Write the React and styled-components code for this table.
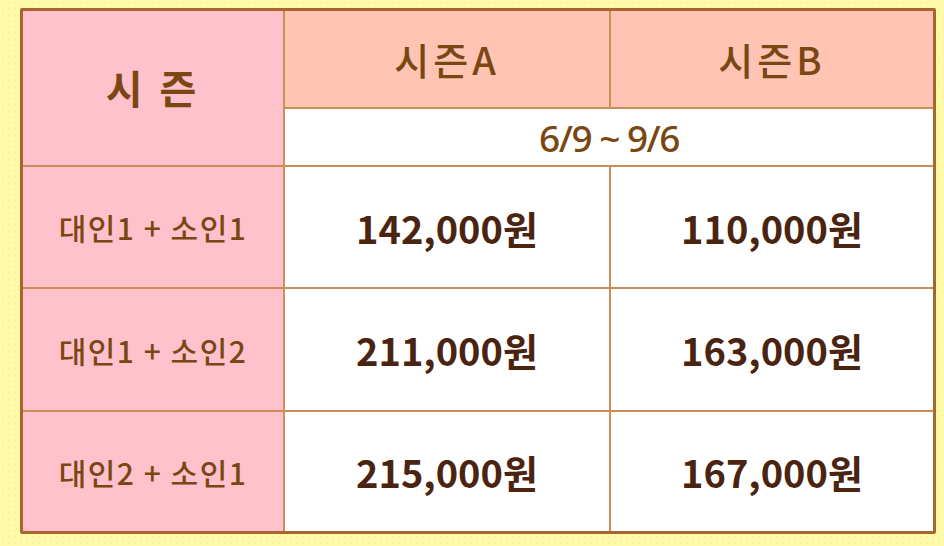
import React from 'react';
import styled, { createGlobalStyle } from 'styled-components';

const COLORS = {
    yellow: '#fffaa8',
    pink: '#ffc1cc',
    salmon: '#ffc4b3',
    white: '#ffffff',
    line: '#cc8d58',
    outline: '#a7662d',
    label: '#7a4712',
    price: '#4a2410',
};

const GlobalStyle = createGlobalStyle`
    html, body {
        margin: 0;
        padding: 0;
        background: ${COLORS.yellow};
    }
    body {
        font-family: "Noto Sans CJK KR", "Noto Sans", sans-serif;
    }
`;

const Page = styled.div`
    width: 944px;
    height: 546px;
    box-sizing: border-box;
    padding: 8px 8px 12px 20px;
    background-color: ${COLORS.yellow};
    background-image: radial-gradient(rgba(220, 200, 120, 0.35) 0.6px, transparent 0.8px);
    background-size: 6px 6px;
`;

const Table = styled.div`
    display: grid;
    grid-template-columns: 260px 324px 1fr;
    grid-template-rows: 96px 56px 120px 121px 1fr;
    gap: 2px;
    width: 916px;
    height: 526px;
    box-sizing: border-box;
    border: 3px solid ${COLORS.outline};
    border-radius: 2px;
    background: ${COLORS.line};
`;

const Cell = styled.div`
    display: flex;
    align-items: center;
    justify-content: center;
    background: ${({ $bg }) => $bg || COLORS.white};
    grid-row: ${({ $row }) => $row || 'auto'};
    grid-column: ${({ $col }) => $col || 'auto'};
    white-space: pre;
`;

const SeasonTitle = styled.span`
    font-size: 40px;
    font-weight: 700;
    color: ${COLORS.label};
    letter-spacing: 4px;
    margin-bottom: 2px;
`;

const SeasonHead = styled.span`
    font-size: 38px;
    font-weight: 500;
    color: ${COLORS.label};
    letter-spacing: 4px;
    margin-bottom: 2px;
`;

const DateText = styled.span`
    font-family: "Noto Sans", sans-serif;
    font-size: 37px;
    font-weight: 500;
    color: ${COLORS.label};
    letter-spacing: -1.5px;
`;

const RowLabel = styled.span`
    font-size: 30px;
    font-weight: 500;
    color: ${COLORS.label};
    letter-spacing: 1.5px;
`;

const Price = styled.span`
    font-size: 38px;
    font-weight: 700;
    color: ${COLORS.price};
    letter-spacing: 0px;
`;

const rows = [
    { label: '대인1 + 소인1', a: '142,000원', b: '110,000원' },
    { label: '대인1 + 소인2', a: '211,000원', b: '163,000원' },
    { label: '대인2 + 소인1', a: '215,000원', b: '167,000원' },
];

export default function App() {
    return (
        <Page>
            <GlobalStyle />
            <Table>
                <Cell $bg={COLORS.pink} $row="1 / span 2" $col="1">
                    <SeasonTitle>시 즌</SeasonTitle>
                </Cell>
                <Cell $bg={COLORS.salmon}>
                    <SeasonHead>시즌A</SeasonHead>
                </Cell>
                <Cell $bg={COLORS.salmon}>
                    <SeasonHead>시즌B</SeasonHead>
                </Cell>
                <Cell $col="2 / span 2">
                    <DateText>6/9 ~ 9/6</DateText>
                </Cell>
                {rows.map((r) => (
                    <React.Fragment key={r.label}>
                        <Cell $bg={COLORS.pink}>
                            <RowLabel>{r.label}</RowLabel>
                        </Cell>
                        <Cell>
                            <Price>{r.a}</Price>
                        </Cell>
                        <Cell>
                            <Price>{r.b}</Price>
                        </Cell>
                    </React.Fragment>
                ))}
            </Table>
        </Page>
    );
}
